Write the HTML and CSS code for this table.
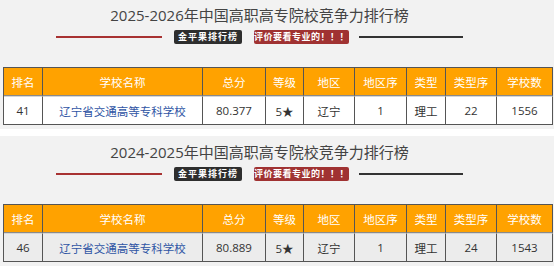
FILE: index.html
```html
<!DOCTYPE html>
<html lang="zh">
<head>
<meta charset="utf-8">
<link rel="stylesheet" href="styles.css">
</head>
<body>
<section class="block">
  <div class="head">
    <h2 class="title">2025-2026年中国高职高专院校竞争力排行榜</h2>
    <div class="sub">
      <span class="line line-red"></span>
      <span class="badge badge-dark">金平果排行榜</span>
      <span class="badge badge-red">评价要看专业的！！！</span>
      <span class="line line-dark"></span>
    </div>
  </div>
  <table class="rank">
    <colgroup>
      <col class="c1"><col class="c2"><col class="c3"><col class="c4"><col class="c5"><col class="c6"><col class="c7"><col class="c8"><col class="c9">
    </colgroup>
    <thead>
      <tr><th>排名</th><th>学校名称</th><th>总分</th><th>等级</th><th>地区</th><th>地区序</th><th>类型</th><th>类型序</th><th>学校数</th></tr>
    </thead>
    <tbody>
      <tr><td>41</td><td class="name">辽宁省交通高等专科学校</td><td>80.377</td><td>5★</td><td>辽宁</td><td>1</td><td>理工</td><td>22</td><td>1556</td></tr>
    </tbody>
  </table>
</section>
<section class="block block-2">
  <div class="head">
    <h2 class="title">2024-2025年中国高职高专院校竞争力排行榜</h2>
    <div class="sub">
      <span class="line line-red"></span>
      <span class="badge badge-dark">金平果排行榜</span>
      <span class="badge badge-red">评价要看专业的！！！</span>
      <span class="line line-dark"></span>
    </div>
  </div>
  <table class="rank rank-alt">
    <colgroup>
      <col class="c1"><col class="c2"><col class="c3"><col class="c4"><col class="c5"><col class="c6"><col class="c7"><col class="c8"><col class="c9">
    </colgroup>
    <thead>
      <tr><th>排名</th><th>学校名称</th><th>总分</th><th>等级</th><th>地区</th><th>地区序</th><th>类型</th><th>类型序</th><th>学校数</th></tr>
    </thead>
    <tbody>
      <tr><td>46</td><td class="name">辽宁省交通高等专科学校</td><td>80.889</td><td>5★</td><td>辽宁</td><td>1</td><td>理工</td><td>24</td><td>1543</td></tr>
    </tbody>
  </table>
</section>
</body>
</html>
```

FILE: styles.css
```css
html, body {
  margin: 0;
  padding: 0;
  background: #ffffff;
  font-family: "Open Sans", "Noto Sans", "Noto Sans CJK SC", sans-serif;
}

.block {
  background: #f2f2f2;
  padding: 4px 0 4px 0;
}

.block-2 {
  margin-top: 7px;
  padding-top: 5px;
}

.head {
  width: 519px;
}

.title {
  margin: 0;
  font-size: 15px;
  line-height: 22px;
  font-weight: normal;
  color: #444444;
  text-align: center;
  font-family: "Open Sans", "Noto Sans CJK SC", sans-serif;
}

.sub {
  display: flex;
  justify-content: center;
  align-items: center;
  margin-top: 4px;
  height: 14px;
}

.line {
  display: block;
  width: 106px;
  height: 2px;
}

.line-red {
  background: #a83232;
  margin-right: 12px;
}

.line-dark {
  background: #333333;
  margin-left: 10px;
  width: 104px;
}

.badge {
  display: block;
  height: 14px;
  line-height: 14px;
  font-size: 9px;
  font-weight: bold;
  color: #ffffff;
  border-radius: 2px;
  text-align: center;
  font-family: "Noto Sans CJK SC", sans-serif;
  letter-spacing: 1px;
}

.badge-dark {
  background: #2e2e2e;
  width: 68px;
  margin-right: 12px;
}

.badge-red {
  background: #a03232;
  width: 95px;
  letter-spacing: 0.5px;
}

.rank {
  margin: 23px 0 0 3px;
  width: 549px;
  table-layout: fixed;
  border-collapse: separate;
  border-spacing: 0;
  border-left: 1px solid #555;
  font-size: 11.5px;
}

.c1 { width: 39px; }
.c2 { width: 160px; }
.c3 { width: 63px; }
.c4 { width: 38px; }
.c5 { width: 51px; }
.c6 { width: 52px; }
.c7 { width: 39px; }
.c8 { width: 51px; }
.c9 { width: 56px; }

.rank th {
  background: #ffa200;
  color: #ffffff;
  font-weight: normal;
  height: 27px;
  padding: 0;
  border-top: 1px solid #555;
  border-right: 1px solid #555;
  border-bottom: 1px solid #8a8a8a;
  text-align: center;
}

.rank td {
  background: #ffffff;
  color: #333333;
  height: 27px;
  padding: 0;
  text-align: center;
  border-top: 1px solid #d6d6d6;
  border-right: 1px solid #555;
  border-bottom: 1px solid #555;
}

.rank td.name {
  color: #2f55a4;
}

.rank-alt td {
  background: #ececec;
}
```
